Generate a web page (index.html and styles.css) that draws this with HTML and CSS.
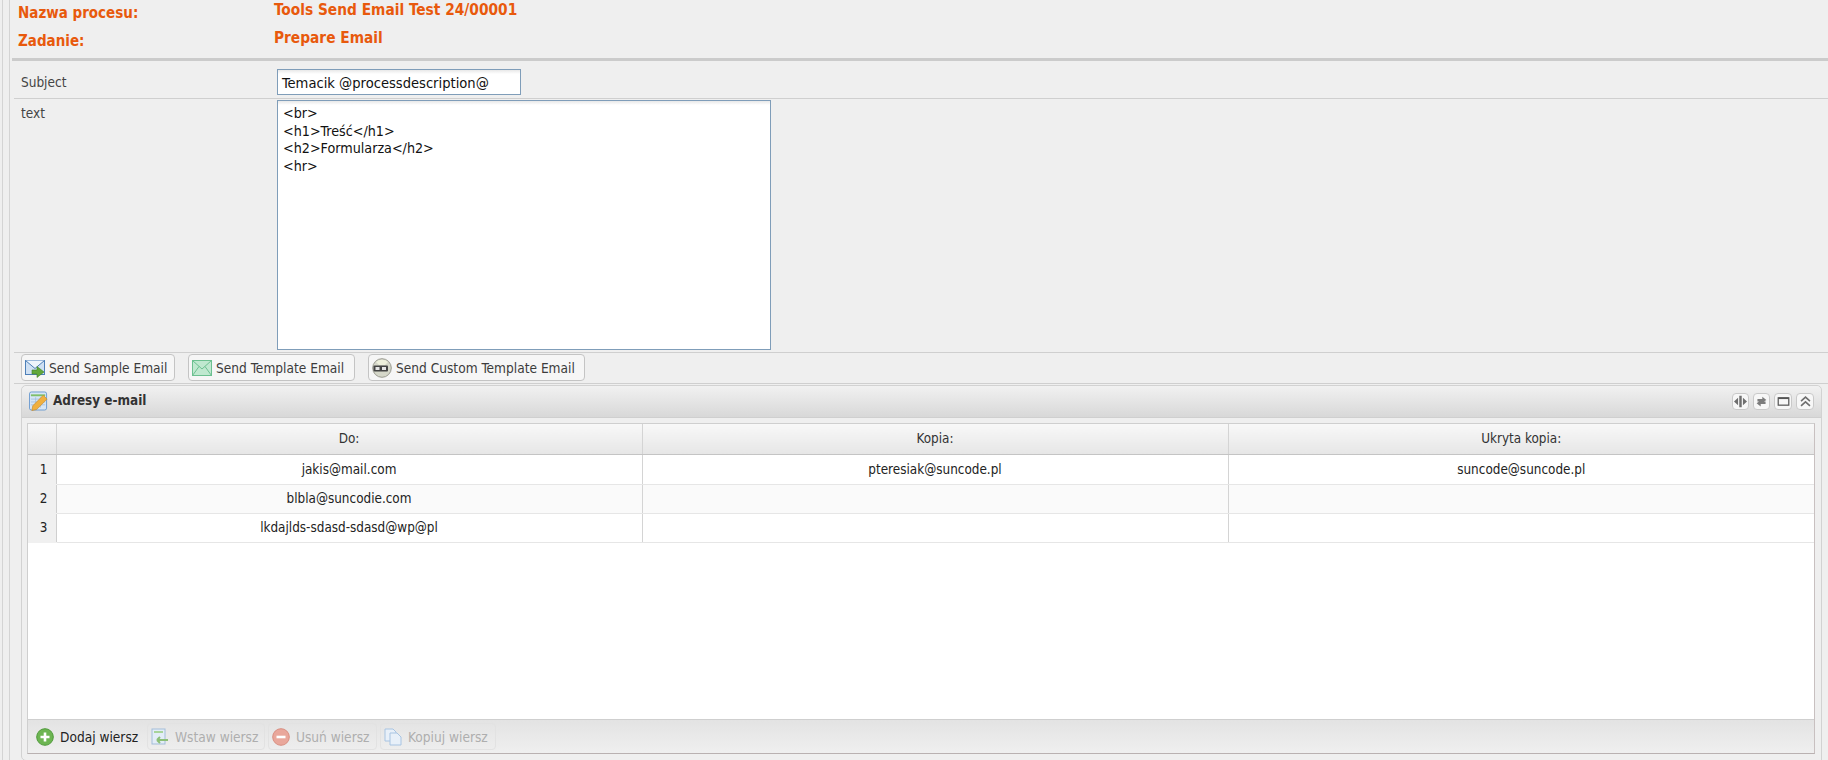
FILE: index.html
```html
<!DOCTYPE html>
<html lang="pl">
<head>
<meta charset="utf-8">
<title>Prepare Email</title>
<link rel="stylesheet" href="styles.css">
</head>
<body>
<div class="outer">
<div class="main">
  <header class="process">
    <div class="process-row first"><span class="process-label">Nazwa procesu:</span><span class="process-value">Tools Send Email Test 24/00001</span></div>
    <div class="process-row"><span class="process-label">Zadanie:</span><span class="process-value">Prepare Email</span></div>
  </header>
  <form class="form">
    <div class="field subject-field">
      <label class="field-label">Subject</label>
      <div class="input-box">Temacik @processdescription@</div>
    </div>
    <div class="field text-field">
      <label class="field-label">text</label>
      <div class="textarea-box">&lt;br&gt;<br>&lt;h1&gt;Treść&lt;/h1&gt;<br>&lt;h2&gt;Formularza&lt;/h2&gt;<br>&lt;hr&gt;</div>
    </div>
    <div class="actions">
      <button type="button" class="action b1"><svg class="ic" viewBox="0 0 20 20"><rect x=".5" y="2.500" width="19" height="14" fill="#cfe0f3" stroke="#4d7fb8"/><path d="M.5 2.500l9.500 8 9.500-8" fill="#eef4fb" stroke="#4d7fb8"/><path d="M7 12h5V8.500l7 5.500-7 5.500V16H7z" fill="#62a83c" stroke="#3f7f25" stroke-width=".6"/></svg>Send Sample Email</button>
      <button type="button" class="action b2"><svg class="ic" viewBox="0 0 20 20"><rect x=".5" y="2.500" width="19" height="15" fill="#bfe8cf" stroke="#6cc090"/><path d="M.5 2.500l9.500 8.500 9.500-8.500M.5 17.500l6.500-9M19.500 17.500l-6.500-9" fill="none" stroke="#6cc090"/></svg>Send Template Email</button>
      <button type="button" class="action b3"><svg class="ic" viewBox="0 0 20 20"><circle cx="10" cy="10" r="9.300" fill="#d5d7c9" stroke="#9a9a90"/><path d="M4 4a9 9 0 0 1 12 0l-3 3H7z" fill="#eef0dc"/><rect x="1.500" y="7.500" width="14.500" height="6" rx="1" fill="#444"/><rect x="3.500" y="9" width="4" height="3" fill="#e5e5e5"/><rect x="10" y="9" width="4" height="3" fill="#e5e5e5"/></svg>Send Custom Template Email</button>
    </div>
  </form>
  <section class="panel">
    <div class="panel-head">
      <svg class="panel-ic" viewBox="0 0 20 20"><rect x=".5" y=".5" width="18" height="19" rx="2" fill="#d6e6f6" stroke="#6b9bd0"/><path d="M2 4h15" stroke="#7fbf6a" stroke-width="2"/><path d="M2 8h15M2 11h15M2 14h15M7 6v11M12 6v11" stroke="#9dbbdc" stroke-width=".8"/><path d="M4 15L15 4l4 4-11 11-5 1z" fill="#f0b040" stroke="#c58a2a" stroke-width=".7"/></svg>
      <h2 class="panel-title">Adresy e-mail</h2>
      <div class="tools">
        <span class="tool"><svg viewBox="0 0 16 16"><path d="M6.500 1h3v14h-3zM0 8l5-4.500v9zM16 8l-5-4.500v9z" fill="#6e6e6e"/></svg></span>
        <span class="tool"><svg viewBox="0 0 16 16"><path d="M3 7V5h6V2l5 4-3 2H3zM13 9v2H7v3L2 10l3-2h8z" fill="#7c7c7c"/></svg></span>
        <span class="tool wide"><svg viewBox="0 0 16 16"><rect x="1.500" y="3.500" width="13" height="9" fill="none" stroke="#555" stroke-width="1.500"/><path d="M1.500 4h13" stroke="#555" stroke-width="2"/></svg></span>
        <span class="tool wide"><svg viewBox="0 0 16 16"><path d="M2.500 7.500l5.500-5 5.500 5M2.500 13.500l5.500-5 5.500 5" fill="none" stroke="#6e6e6e" stroke-width="2"/></svg></span>
      </div>
    </div>
    <div class="grid-box">
      <div class="grid-body">
        <table class="grid">
          <colgroup><col class="c0"><col class="c1"><col class="c2"><col class="c3"></colgroup>
          <thead><tr><th></th><th>Do:</th><th>Kopia:</th><th>Ukryta kopia:</th></tr></thead>
          <tbody>
            <tr class="first-row"><td class="num">1</td><td>jakis@mail.com</td><td>pteresiak@suncode.pl</td><td>suncode@suncode.pl</td></tr>
            <tr class="alt"><td class="num">2</td><td>blbla@suncodie.com</td><td></td><td></td></tr>
            <tr><td class="num">3</td><td>lkdajlds-sdasd-sdasd@wp@pl</td><td></td><td></td></tr>
          </tbody>
        </table>
      </div>
      <div class="grid-bar">
        <button type="button" class="bar-btn add"><svg class="bar-ic" viewBox="0 0 18 18"><circle cx="9" cy="9" r="8.300" fill="#6db552" stroke="#4f9a3a"/><path d="M9 4.500v9M4.500 9h9" stroke="#fff" stroke-width="2.600"/></svg>Dodaj wiersz</button>
        <button type="button" class="bar-btn off w-ins"><svg class="bar-ic" viewBox="0 0 18 18"><rect x="1" y="1" width="13" height="15" fill="#e3edf7" stroke="#a3bdd9"/><path d="M3 4h9" stroke="#a8d49a" stroke-width="2"/><path d="M6 12h11M6 12l3-3M6 12l3 3" stroke="#8cbf78" stroke-width="2" fill="none"/></svg>Wstaw wiersz</button>
        <button type="button" class="bar-btn off w-del"><svg class="bar-ic" viewBox="0 0 18 18"><circle cx="9" cy="9" r="8.300" fill="#e9a79b" stroke="#d98e80"/><path d="M4.500 9h9" stroke="#fff" stroke-width="2.600"/></svg>Usuń wiersz</button>
        <button type="button" class="bar-btn off w-cpy"><svg class="bar-ic" viewBox="0 0 18 18"><path d="M1 1h8l3 3v9H1z" fill="#e8f0f9" stroke="#a8c4e2"/><path d="M6 5h7l4 4v8H6z" fill="#e8f0f9" stroke="#a8c4e2"/></svg>Kopiuj wiersz</button>
      </div>
    </div>
  </section>
</div>
</div>
</body>
</html>
```
FILE: styles.css
```css
* { box-sizing: border-box; }
html, body { margin: 0; padding: 0; height: 760px; overflow: hidden; background: #efefef; }
body {
  font-family: "DejaVu Sans", "Liberation Sans", sans-serif;
  font-stretch: condensed;
  font-size: 13.500px;
  color: #333;
}
.outer { height: 760px; margin-left: 2px; border-left: 1px solid #d4d4d4; padding-left: 6px; }
.main { height: 760px; border-left: 1px solid #d4d4d4; padding-left: 2px; }

.process { height: 61px; border-bottom: 3px solid #cbcbcb; color: #e8590c; font-weight: bold; font-size: 15px; padding-left: 6px; }
.process-row { display: flex; height: 28px; padding-top: 2px; }
.process-label { width: 256px; padding-top: 2px; }
.process-value { line-height: 17px; font-size: 15.300px; }

.form { margin-left: 2px; }
.field { display: flex; border-bottom: 1px solid #cfcfcf; }
.field-label { width: 263px; padding-left: 7px; color: #444; }
.subject-field { height: 38px; padding-top: 8px; }
.subject-field .field-label { padding-top: 5px; }
.text-field { height: 254px; padding-top: 1px; }
.text-field .field-label { padding-top: 5px; }
.input-box { width: 244px; height: 26px; padding: 4px 4px; border: 1px solid #7f9db9; background: #fff linear-gradient(#e8e8e8, #fff 4px); font-size: 14.600px; color: #111; line-height: 18px; }
.textarea-box { width: 494px; height: 250px; padding: 4px 5px; border: 1px solid #7f9db9; background: #fff linear-gradient(#e8e8e8, #fff 4px); font-size: 14.200px; line-height: 17.500px; color: #111; }

.actions { height: 31px; border-bottom: 1px solid #cfcfcf; display: flex; align-items: flex-start; padding: 1px 0 0 7px; }
.action { height: 27px; display: flex; align-items: center; gap: 4px; padding: 0 0 0 3px; border: 1px solid #c4c4c4; border-radius: 4px; background: #f6f6f6; font: inherit; font-stretch: condensed; font-size: 13.600px; color: #3c3c3c; }
.ic { width: 20px; height: 20px; flex: none; }
.b1 { width: 154px; margin-right: 13px; }
.b2 { width: 167px; margin-right: 13px; }
.b3 { width: 217px; }

.panel { margin: 1px 0 0 9px; width: 1801px; height: 376px; border: 1px solid #d2d2d2; border-radius: 5px 5px 0 5px; }
.panel-head { height: 32px; display: flex; align-items: center; padding: 0 7px 1px 7px; background: linear-gradient(#f1f1f1, #d8d8d8); border-bottom: 1px solid #cfcfcf; border-radius: 5px 5px 0 0; }
.panel-ic { width: 19px; height: 20px; margin-right: 5px; flex: none; }
.panel-title { margin: 0 0 1px; font-size: 13.400px; font-weight: bold; color: #333; }
.tools { margin-left: auto; display: flex; gap: 4px; }
.tool { width: 17px; height: 17px; display: flex; align-items: center; justify-content: center; border: 1px solid #c9c9c9; border-radius: 4px; background: #f7f7f7; }
.tool.wide { width: 18px; }
.tool svg { width: 13px; height: 13px; }

.grid-box { margin: 5px 6px 0 5px; height: 331px; border: 1px solid #cfcfcf; border-bottom-color: #b9b1b1; border-right-color: #c8c0c0; display: flex; flex-direction: column; }
.grid-body { flex: 1; background: #fff; }
.grid { width: 100%; border-collapse: collapse; table-layout: fixed; }
.c0 { width: 28px; }
.c1 { width: 586px; }
.c2 { width: 586px; }
.grid th { height: 30px; font-weight: normal; font-size: 13.400px; background: linear-gradient(#f8f8f8, #e6e6e6); border-right: 1px solid #d4d4d4; border-bottom: 1px solid #c4c4c4; color: #333; }
.grid td { height: 29px; text-align: center; font-size: 13.400px; border-right: 1px solid #d4d4d4; border-bottom: 1px solid #e6e6e6; color: #222; }
.grid .first-row td { height: 30px; }
.grid td:last-child, .grid th:last-child { border-right: 0; }
.grid td.num { text-align: right; padding-right: 8px; background: #f0f0f0; border-bottom-color: #f0f0f0; border-right-color: #cfcfcf; }
.alt td { background: #fafafa; }

.grid-bar { height: 34px; flex: none; display: flex; align-items: center; padding-left: 7px; gap: 3px; border-top: 1px solid #cfcfcf; background: linear-gradient(#e3e3e3, #efefef); }
.bar-btn { height: 27px; display: flex; align-items: center; gap: 6px; padding: 0 0 0 3px; border: 1px solid transparent; border-radius: 4px; background: transparent; font: inherit; font-stretch: condensed; font-size: 13.600px; color: #222; }
.bar-ic { width: 18px; height: 18px; flex: none; }
.add { width: 109px; padding-left: 0; }
.off { border-color: #e2e2e2; color: #aeaeae; }
.w-ins { width: 118px; }
.w-del { width: 109px; }
.w-cpy { width: 116px; }
```
